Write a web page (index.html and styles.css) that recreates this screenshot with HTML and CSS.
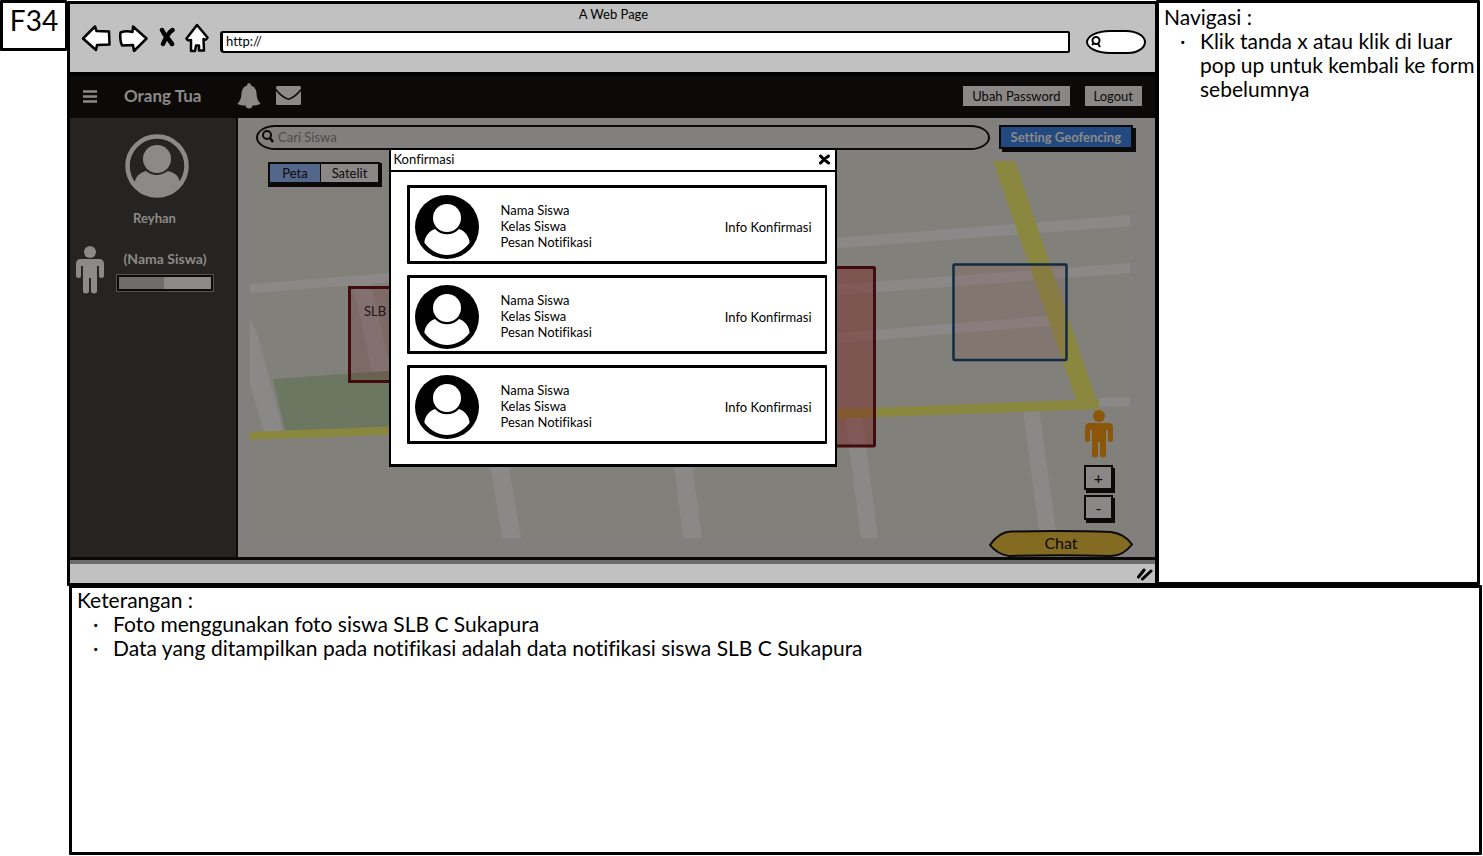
FILE: index.html
```html
<!DOCTYPE html>
<html lang="id">
<head>
<meta charset="utf-8">
<meta name="viewport" content="width=device-width, initial-scale=1">
<title>F34 - Konfirmasi</title>
<link rel="stylesheet" href="styles.css">
</head>
<body>
<svg width="0" height="0" class="defs" aria-hidden="true">
  <symbol id="avatar-solid" viewBox="0 0 64 64">
    <circle cx="32" cy="32" r="32" fill="#000"/>
    <path d="M20 34 C13 36 9 44 9.500 48 C22 64 42 64 54.500 48 C55 44 51 36 44 34 C38 41 26 41 20 34Z" fill="#fff"/>
    <circle cx="32" cy="23" r="14" fill="#fff"/>
  </symbol>
  <symbol id="person" viewBox="0 0 28 48">
    <circle cx="14" cy="6" r="6"/>
    <path d="M5 13H23Q28 13 28 18V30Q28 32 25.500 32Q23 32 23 30V20H21V45Q21 47.500 18 47.500Q15 47.500 15 45V32H13V45Q13 47.500 10 47.500Q7 47.500 7 45V20H5V30Q5 32 2.500 32Q0 32 0 30V18Q0 13 5 13Z"/>
  </symbol>
</svg>
<div class="sheet">
  <h1 class="tag">F34</h1>

  <div class="browser">
    <header class="chrome">
      <div class="chrome-title">A Web Page</div>
      <div class="chrome-bar">
        <button class="icon-button" aria-label="Kembali"><svg width="30" height="28" viewBox="0 0 30 28"><path d="M2 14.500 L14 2.500 L15.500 7 L28 7.500 L28.500 20.500 L16 21 L15 26 Z" class="outline"/></svg></button>
        <button class="icon-button" aria-label="Maju"><svg width="30" height="28" viewBox="0 0 30 28"><path d="M1.500 8.500 Q7 6.500 13.500 8 L14 2.500 L27.500 14.500 L15 27 L14 21 L3 21.500 Q.5 16 1.500 8.500Z" class="outline"/></svg></button>
        <button class="icon-button" aria-label="Berhenti"><svg width="20" height="22" viewBox="0 0 20 22"><path d="M5 3 Q7 7 9 9.500 Q12 12 15 17 M15.500 3 Q12 5 10 9.500 Q8 12 6 17" fill="none" stroke="#000" stroke-width="4.500" stroke-linecap="round"/></svg></button>
        <button class="icon-button" aria-label="Beranda"><svg width="24" height="30" viewBox="0 0 24 30"><path d="M12 2 L22.500 14.500 Q21 18 18.500 16 L19 27.500 H14 V22.500 H11 L10 28 H6 V17 Q2 18 1.500 15.500 Z" class="outline"/></svg></button>
        <input class="address" type="text" value="http://" aria-label="Alamat">
        <label class="quick-search">
          <svg width="11" height="12" viewBox="0 0 11 12"><circle cx="5" cy="4.500" r="3.500" fill="none" stroke="#000" stroke-width="2"/><path d="M7 7.500L9 11M1 9L3 7" stroke="#000" stroke-width="2"/></svg>
          <input type="search" aria-label="Cari di web">
        </label>
      </div>
    </header>

    <div class="app">
      <nav class="topbar">
        <button class="icon-button menu" aria-label="Menu"><svg width="14" height="13" viewBox="0 0 14 13"><path d="M0 1.500H14M0 6.500H14M0 11.500H14" stroke="#8c8a88" stroke-width="2.500"/></svg></button>
        <strong class="role">Orang Tua</strong>
        <button class="icon-button bell" aria-label="Notifikasi"><svg width="24" height="26" viewBox="0 0 24 26"><path d="M12 0Q14 0 14 2.500Q19 4 19.500 10Q19.500 17 23.500 20.500Q22 22.500 15.500 22.500Q15 25.500 12 25.500Q9 25.500 8.500 22.500Q2 22.500 .5 20.500Q4.500 17 4.500 10Q5 4 10 2.500Q10 0 12 0Z" fill="#8c8a88"/></svg></button>
        <button class="icon-button" aria-label="Pesan"><svg width="25" height="20" viewBox="0 0 25 20"><path d="M1 0H24Q25 0 25 2.500Q18 11 12.500 12.500Q7 11 0 2.500Q0 0 1 0Z" fill="#8c8a88"/><path d="M0 5Q7 13 12.500 14Q18 13 25 5V17.500Q25 19 23.500 19H1.500Q0 19 0 17.500Z" fill="#8c8a88"/></svg></button>
        <span class="spacer"></span>
        <button class="flat">Ubah Password</button>
        <button class="flat">Logout</button>
      </nav>

      <div class="workspace">
        <aside class="sidebar">
          <svg class="me" width="64" height="64" viewBox="0 0 64 64"><circle cx="32" cy="32" r="29.500" fill="none" stroke="#8c8a88" stroke-width="4.500"/><circle cx="32" cy="25" r="14" fill="#8c8a88"/><path d="M21 37Q31 45 43 37Q53 39 55 48L49 56Q32 66 15 56L9.500 48Q12 39 21 37Z" fill="#8c8a88"/></svg>
          <div class="me-name">Reyhan</div>
          <div class="student">
            <svg width="28" height="48" fill="#8c8a88"><use href="#person"/></svg>
            <div class="student-info">
              <label for="battery">(Nama Siswa)</label>
              <progress id="battery" max="100" value="49"></progress>
            </div>
          </div>
        </aside>

        <main class="main">
          <div class="search-row">
            <label class="search">
              <svg width="12" height="13" viewBox="0 0 12 13"><circle cx="5" cy="5" r="4" fill="none" stroke="#0c0a09" stroke-width="2"/><path d="M8 8L11 12" stroke="#0c0a09" stroke-width="2.500"/></svg>
              <input type="search" placeholder="Cari Siswa" aria-label="Cari Siswa">
            </label>
            <button class="primary">Setting Geofencing</button>
          </div>

          <div class="map">
            <svg class="map-art" viewBox="250 161 880 377" preserveAspectRatio="xMidYMid slice">
              <rect x="250" y="161" width="880" height="377" fill="#82807a"/>
              <g fill="#8a8987">
                <path d="M250 284L1130 215V226L250 293Z"/>
                <path d="M600 302L1130 263V273L600 313Z"/>
                <path d="M600 352L1060 315V325L600 362Z"/>
                <path d="M250 320L256 330L283 431H264L250 385Z"/>
                <path d="M352 280H370L398 400H378Z"/>
                <path d="M489 456H507L521 538H502Z"/>
                <path d="M673 456H691L702 538H683Z"/>
                <path d="M845 415H862L878 538H861Z"/>
                <path d="M1023 410H1039L1057 538H1040Z"/>
                <path d="M1098 398L1130 397V406L1098 407Z"/>
              </g>
              <path d="M273 379L400 370V427L285 431Z" fill="#6b7761"/>
              <path d="M250 432L1099 399V409L250 440Z" fill="#8a873f"/>
              <path d="M993 161H1015L1098 405H1078Z" fill="#8a873f"/>
              <rect x="349.500" y="287.500" width="110" height="94" fill="#6a0e12" fill-opacity=".2" stroke="#420b0d" stroke-width="3"/>
              <rect x="740" y="267.500" width="134.500" height="178.500" rx="1" fill="#741312" fill-opacity=".4" stroke="#420b0d" stroke-width="3"/>
              <rect x="953.500" y="264.500" width="113" height="95.500" rx="1" fill="#84524e" fill-opacity=".2" stroke="#122b42" stroke-width="2.500"/>
              <text x="364" y="316" class="zone-label">SLB</text>
            </svg>

            <div class="map-type">
              <button class="active">Peta</button><button>Satelit</button>
            </div>
            <div class="map-tools">
              <svg width="28" height="48" fill="#8c5609"><use href="#person"/></svg>
              <button aria-label="Perbesar">+</button>
              <button aria-label="Perkecil">-</button>
            </div>
          </div>
          <button class="chat"><svg viewBox="0 0 144 27" preserveAspectRatio="none"><path d="M10 4Q14 1 24 1H122Q134 2 143 14Q135 25 122 26H20Q8 25 1 14Q4 8 10 4Z" fill="#846b22"/><path d="M1 15Q10 2 22 1.500Q80 .5 122 2Q136 4 143 14.500Q134 26 122 26Q70 24.500 20 26Q8 24 1 15Z" fill="none" stroke="#0c0a09" stroke-width="2"/></svg><span>Chat</span></button>
        </main>
      </div>

      <section class="dialog" role="dialog" aria-labelledby="dialog-title">
        <header class="dialog-head">
          <h2 id="dialog-title">Konfirmasi</h2>
          <button class="icon-button" aria-label="Tutup"><svg width="13" height="11" viewBox="0 0 13 11"><path d="M2.500 2Q5 5 10.500 9M10.500 2Q6 5 2.500 9" fill="none" stroke="#000" stroke-width="3" stroke-linecap="round"/></svg></button>
        </header>
        <ul class="cards">
          <li class="card"><svg width="64" height="64"><use href="#avatar-solid"/></svg><div class="card-text"><p>Nama Siswa</p><p>Kelas Siswa</p><p>Pesan Notifikasi</p></div><span>Info Konfirmasi</span></li>
          <li class="card"><svg width="64" height="64"><use href="#avatar-solid"/></svg><div class="card-text"><p>Nama Siswa</p><p>Kelas Siswa</p><p>Pesan Notifikasi</p></div><span>Info Konfirmasi</span></li>
          <li class="card"><svg width="64" height="64"><use href="#avatar-solid"/></svg><div class="card-text"><p>Nama Siswa</p><p>Kelas Siswa</p><p>Pesan Notifikasi</p></div><span>Info Konfirmasi</span></li>
        </ul>
      </section>
    </div>

    <footer class="status">
      <svg width="18" height="14" viewBox="0 0 18 14"><path d="M2.500 10L8 3M6.500 12L15 4" stroke="#000" stroke-width="3" stroke-linecap="round"/></svg>
    </footer>
  </div>

  <section class="note navigation">
    <h2>Navigasi :</h2>
    <ul><li>Klik tanda x atau klik di luar pop up untuk kembali ke form sebelumnya</li></ul>
  </section>

  <section class="note description">
    <h2>Keterangan :</h2>
    <ul>
      <li>Foto menggunakan foto siswa SLB C Sukapura</li>
      <li>Data yang ditampilkan pada notifikasi adalah data notifikasi siswa SLB C Sukapura</li>
    </ul>
  </section>
</div>
</body>
</html>
```

FILE: styles.css
```css
* { box-sizing: border-box; }

body, h1, h2, p, ul { margin: 0; padding: 0; }
ul { list-style: none; }

body {
  background: #fff;
  color: #000;
  font: 13px/16px Lato, "Liberation Sans", sans-serif;
  font-variant-ligatures: none;
}

button, input {
  font: inherit;
  color: inherit;
  border: 0;
  padding: 0;
  background: none;
  border-radius: 0;
}

input { min-width: 0; outline: 0; }
svg { display: block; flex: none; }
.defs { position: absolute; }
.icon-button { display: block; flex: none; }
.outline { fill: #fff; stroke: #000; stroke-width: 2.5; stroke-linejoin: round; }
.spacer { flex: 1; }

.sheet {
  display: grid;
  grid-template-columns: 67px minmax(0, 1fr) 325px;
  grid-template-rows: auto 1fr;
  min-height: 100vh;
  padding-bottom: 1px;
}

.tag {
  align-self: start;
  height: 51px;
  border: 3px solid #000;
  border-right-width: 2px;
  border-radius: 1px;
  text-align: center;
  font-size: 28px;
  font-weight: 400;
  line-height: 34px;
}

/* Browser window */
.browser {
  display: flex;
  flex-direction: column;
  margin-top: 1px;
  border: 3px solid #000;
  border-radius: 1px;
}

.chrome {
  background: #c1c1c1;
  border-bottom: 4px solid #000;
  padding: 2px 9px 19px 11px;
}

.chrome-title { text-align: center; }

.chrome-bar {
  display: flex;
  align-items: center;
  gap: 8px;
  height: 31px;
}

.address {
  flex: 1;
  height: 22px;
  margin: 8px 8px 0 3px;
  padding: 0 3px 2px;
  background: #fff;
  border: 2px solid #000;
  border-left-width: 3px;
  border-radius: 3px 2px 2px 4px;
}

.quick-search {
  display: flex;
  align-items: center;
  width: 60px;
  height: 24px;
  margin-top: 8px;
  padding: 0 3px;
  background: #fff;
  border: 2px solid #000;
  border-radius: 24px 20px 18px 24px / 12px;
}

.quick-search input { width: 36px; }

/* Application */
.app {
  position: relative;
  flex: 1;
  display: flex;
  flex-direction: column;
  border-bottom: 4px solid #6e6d6b;
  background: #82807e;
}

.topbar {
  display: flex;
  align-items: center;
  gap: 15px;
  height: 42px;
  padding: 0 13px 2px;
  background: #0c0a09;
}

.role {
  margin: 0 21px 0 12px;
  color: #8c8a88;
  font-size: 17px;
  font-weight: 700;
}

.flat {
  height: 20px;
  padding: 0 9px;
  background: #8a8886;
  color: #0c0a09;
}

.workspace {
  flex: 1;
  display: flex;
  border-bottom: 3px solid #0c0a09;
}

.sidebar {
  width: 168px;
  padding: 16px 6px;
  background: #252423;
  border-right: 2px solid #0c0a09;
  color: #8c8a88;
  font-weight: 700;
}

.me { margin: 0 auto 12px 49px; }
.me-name { padding-left: 3px; text-align: center; }

.student {
  display: flex;
  gap: 12px;
  margin-top: 20px;
}

.student-info { text-align: center; padding-top: 5px; }
.student-info label { display: block; font-size: 14px; }

progress {
  display: block;
  appearance: none;
  width: 98px;
  height: 18px;
  margin-top: 7px;
  border: 3px solid #0c0a09;
  outline: 1px solid #55534f;
  outline-offset: -1px;
  background: #8c8a88;
}

progress::-webkit-progress-bar { background: #8c8a88; }
progress::-webkit-progress-value { background: #6f6d6c; }

.main {
  position: relative;
  flex: 1;
  display: flex;
  flex-direction: column;
  gap: 11px;
  padding: 7px 25px 19px 12px;
}

.search-row {
  display: flex;
  gap: 9px;
  padding-left: 6px;
  margin-right: -3px;
}

.search {
  flex: 1;
  display: flex;
  align-items: center;
  gap: 4px;
  height: 25px;
  padding: 0 4px 2px;
  border: 2px solid #0c0a09;
  border-radius: 20px / 13px;
}

.search input { flex: 1; }
.search input::placeholder { color: #4d4c4b; opacity: 1; }

.primary {
  height: 24px;
  padding: 0 10px 1px;
  background: #224a80;
  color: #8c8a88;
  border: 2px solid #0c0a09;
  box-shadow: 3px 3px 0 #0c0a09;
  font-weight: 700;
}

.map {
  position: relative;
  flex: 1;
  min-height: 377px;
}

.map-art {
  position: absolute;
  inset: 0;
  width: 100%;
  height: 100%;
}

.zone-label { fill: #211316; font-size: 13px; }

.map-type {
  position: absolute;
  left: 18px;
  top: 1px;
  display: flex;
  height: 22px;
  border: 2px solid #0c0a09;
  box-shadow: 1px 2px 0 1px #0c0a09;
  color: #0c0a09;
}

.map-type button { width: 57px; background: #8a8886; }
.map-type .active { width: 51px; background: #53678a; border-right: 1px solid #0c0a09; }

.map-tools {
  position: absolute;
  right: 17px;
  bottom: 18px;
  display: flex;
  flex-direction: column;
  gap: 5px;
}

.map-tools svg { margin: 0 auto 2px; }

.map-tools button {
  width: 29px;
  height: 25px;
  border: 2px solid #0c0a09;
  box-shadow: 2px 3px 0 #0c0a09;
  background: #8a8886;
  color: #0c0a09;
  font-size: 16px;
}

.chat {
  position: absolute;
  right: 22px;
  bottom: 0;
  width: 144px;
  height: 27px;
  padding-bottom: 2px;
  color: #0c0a09;
  font-size: 16px;
}

.chat svg { position: absolute; inset: 0; width: 100%; height: 100%; }
.chat span { position: relative; }

/* Confirmation pop-up */
.dialog {
  position: absolute;
  top: 72px;
  left: 50%;
  width: 448px;
  transform: translateX(-50%);
  background: #fff;
  border: 2px solid #000;
  border-bottom-width: 3px;
}

.dialog-head {
  display: flex;
  align-items: center;
  justify-content: space-between;
  height: 22px;
  padding: 0 4px 2px 3px;
  border-bottom: 2px solid #000;
}

.dialog-head h2 { font-size: 13px; font-weight: 400; }

.cards {
  display: grid;
  gap: 11px;
  padding: 13px 8px 20px 16px;
}

.card {
  display: flex;
  align-items: center;
  height: 79px;
  padding: 4px 13px 0 5px;
  border: 3px solid #000;
  border-width: 3px 2px 3px 3px;
  border-radius: 1px;
}

.card-text { flex: 1; padding: 0 0 2px 22px; }

.status {
  display: flex;
  justify-content: flex-end;
  align-items: center;
  height: 19px;
  padding-right: 1px;
  background: #c1c1c1;
}

/* Annotations */
.note {
  border: 3px solid #000;
  border-radius: 1px;
  font-size: 21px;
  line-height: 24px;
}

.note h2 { font-size: 21px; font-weight: 400; }
.note li { position: relative; padding-left: 36px; }
.note li::before { content: "·"; position: absolute; left: 16px; }
.navigation { margin: 0 3px 1px -2px; padding: 2px 0 2px 5px; }
.description { grid-column: 2 / -1; margin: -1px 1px 0 2px; padding: 0 5px; }
```
